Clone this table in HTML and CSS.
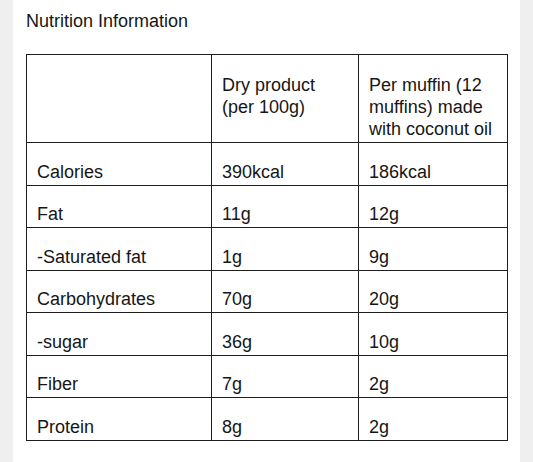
FILE: index.html
```html
<!DOCTYPE html>
<html>
<head>
<meta charset="utf-8">
<link rel="stylesheet" href="styles.css">
</head>
<body>
<div class="panel">
  <div class="title">Nutrition Information</div>
  <table class="nutri">
    <colgroup>
      <col class="c1"><col class="c2"><col class="c3">
    </colgroup>
    <tr class="head">
      <td></td>
      <td>Dry product<br>(per 100g)</td>
      <td>Per muffin (12 muffins) made with coconut oil</td>
    </tr>
    <tr><td>Calories</td><td>390kcal</td><td>186kcal</td></tr>
    <tr><td>Fat</td><td>11g</td><td>12g</td></tr>
    <tr><td>-Saturated fat</td><td>1g</td><td>9g</td></tr>
    <tr><td>Carbohydrates</td><td>70g</td><td>20g</td></tr>
    <tr><td>-sugar</td><td>36g</td><td>10g</td></tr>
    <tr><td>Fiber</td><td>7g</td><td>2g</td></tr>
    <tr><td>Protein</td><td>8g</td><td>2g</td></tr>
  </table>
</div>
</body>
</html>
```

FILE: styles.css
```css
html, body {
  margin: 0;
  padding: 0;
  background: #efefef;
  height: 100%;
}
body {
  font-family: "Liberation Sans", Arial, Helvetica, sans-serif;
  color: #161616;
}
.panel {
  background: #fff;
  margin-left: 13px;
  width: 507px;
  min-height: 100%;
  box-sizing: border-box;
  padding: 10px 0 0 13px;
}
.title {
  font-size: 18px;
  line-height: 22px;
}
.nutri {
  margin-top: 22px;
  border-collapse: collapse;
  table-layout: fixed;
  width: 481px;
  font-size: 18px;
  line-height: 22px;
}
.c1 { width: 185px; }
.c2 { width: 147px; }
.c3 { width: 149px; }
.nutri td {
  border: 1px solid #1e1e1e;
  padding: 17.5px 10px 2px;
  vertical-align: bottom;
}
.nutri .head td {
  padding: 19px 10px 2px;
  vertical-align: top;
}
```
